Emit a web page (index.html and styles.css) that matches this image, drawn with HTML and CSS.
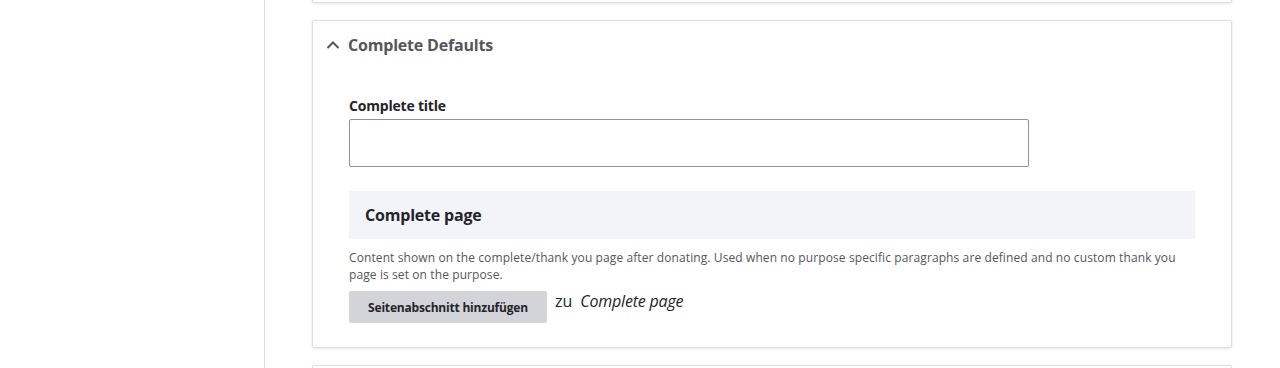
FILE: index.html
```html
<!DOCTYPE html>
<html lang="de">
<head>
<meta charset="utf-8">
<link rel="stylesheet" href="styles.css">
</head>
<body>
<div class="layout">
  <aside class="sidebar"></aside>
  <main class="main">
    <div class="card card-prev"></div>
    <section class="card">
      <div class="summary">
        <svg class="chev" width="14" height="10" viewBox="0 0 14 10"><path d="M1.5 8 L7 2.5 L12.5 8" fill="none" stroke="#55565b" stroke-width="2"/></svg>
        <span class="summary-title">Complete Defaults</span>
      </div>
      <div class="body">
        <label class="label">Complete title</label>
        <div class="input"></div>
        <div class="para-head">Complete page</div>
        <p class="desc">Content shown on the complete/thank you page after donating. Used when no purpose specific paragraphs are defined and no custom thank you page is set on the purpose.</p>
        <div class="add-row">
          <button class="btn">Seitenabschnitt hinzufügen</button>
          <span class="zu">zu</span>
          <em class="target">Complete page</em>
        </div>
      </div>
    </section>
    <div class="card card-next"></div>
  </main>
</div>
</body>
</html>
```

FILE: styles.css
```css
html, body {
  margin: 0;
  padding: 0;
  background: #fff;
  font-family: "Open Sans", "Noto Sans", sans-serif;
  color: #232429;
  overflow: hidden;
  height: 368px;
}
.layout {
  display: flex;
  height: 368px;
}
.sidebar {
  width: 264px;
  flex: none;
  border-right: 1px solid #dcdde4;
}
.main {
  flex: 1;
  padding: 0 48px 0 47px;
  margin-top: -40px;
}
.card {
  border: 1px solid #dedfe6;
  border-radius: 2px;
  box-shadow: 0 1px 3px rgba(0,0,0,0.10);
  background: #fff;
  margin-bottom: 17px;
}
.card-prev {
  height: 41px;
}
.card-next {
  height: 40px;
}
.summary {
  display: flex;
  align-items: center;
  height: 48px;
  padding-left: 13px;
  gap: 8px;
}
.chev {
  display: block;
}
.summary-title {
  font-size: 16px;
  font-weight: 700;
  color: #55565b;
  letter-spacing: -0.2px;
}
.body {
  padding: 28px 36px 24px 36px;
}
.label {
  display: block;
  font-size: 14px;
  font-weight: 700;
  line-height: 18px;
  margin-bottom: 4px;
  letter-spacing: -0.2px;
}
.input {
  width: 678px;
  height: 46px;
  border: 1px solid #8e929c;
  border-radius: 2px;
  margin-bottom: 24px;
}
.para-head {
  background: #f3f4f9;
  height: 48px;
  display: flex;
  align-items: center;
  padding-left: 16px;
  font-size: 16px;
  font-weight: 700;
  color: #232429;
  letter-spacing: -0.2px;
}
.desc {
  margin: 10px 0 8px 0;
  max-width: 835px;
  font-size: 12px;
  line-height: 17px;
  color: #55565b;
  letter-spacing: 0.1px;
}
.add-row {
  display: flex;
  align-items: flex-start;
}
.btn {
  font-family: inherit;
  font-size: 12px;
  font-weight: 700;
  color: #232429;
  background: #d3d4d9;
  border: none;
  border-radius: 2px;
  height: 32px;
  width: 198px;
  padding: 0;
  letter-spacing: -0.2px;
}
.zu {
  font-size: 16px;
  margin-left: 8px;
  line-height: 20px;
}
.target {
  font-size: 16px;
  margin-left: 8px;
  line-height: 20px;
  letter-spacing: -0.2px;
}
```
